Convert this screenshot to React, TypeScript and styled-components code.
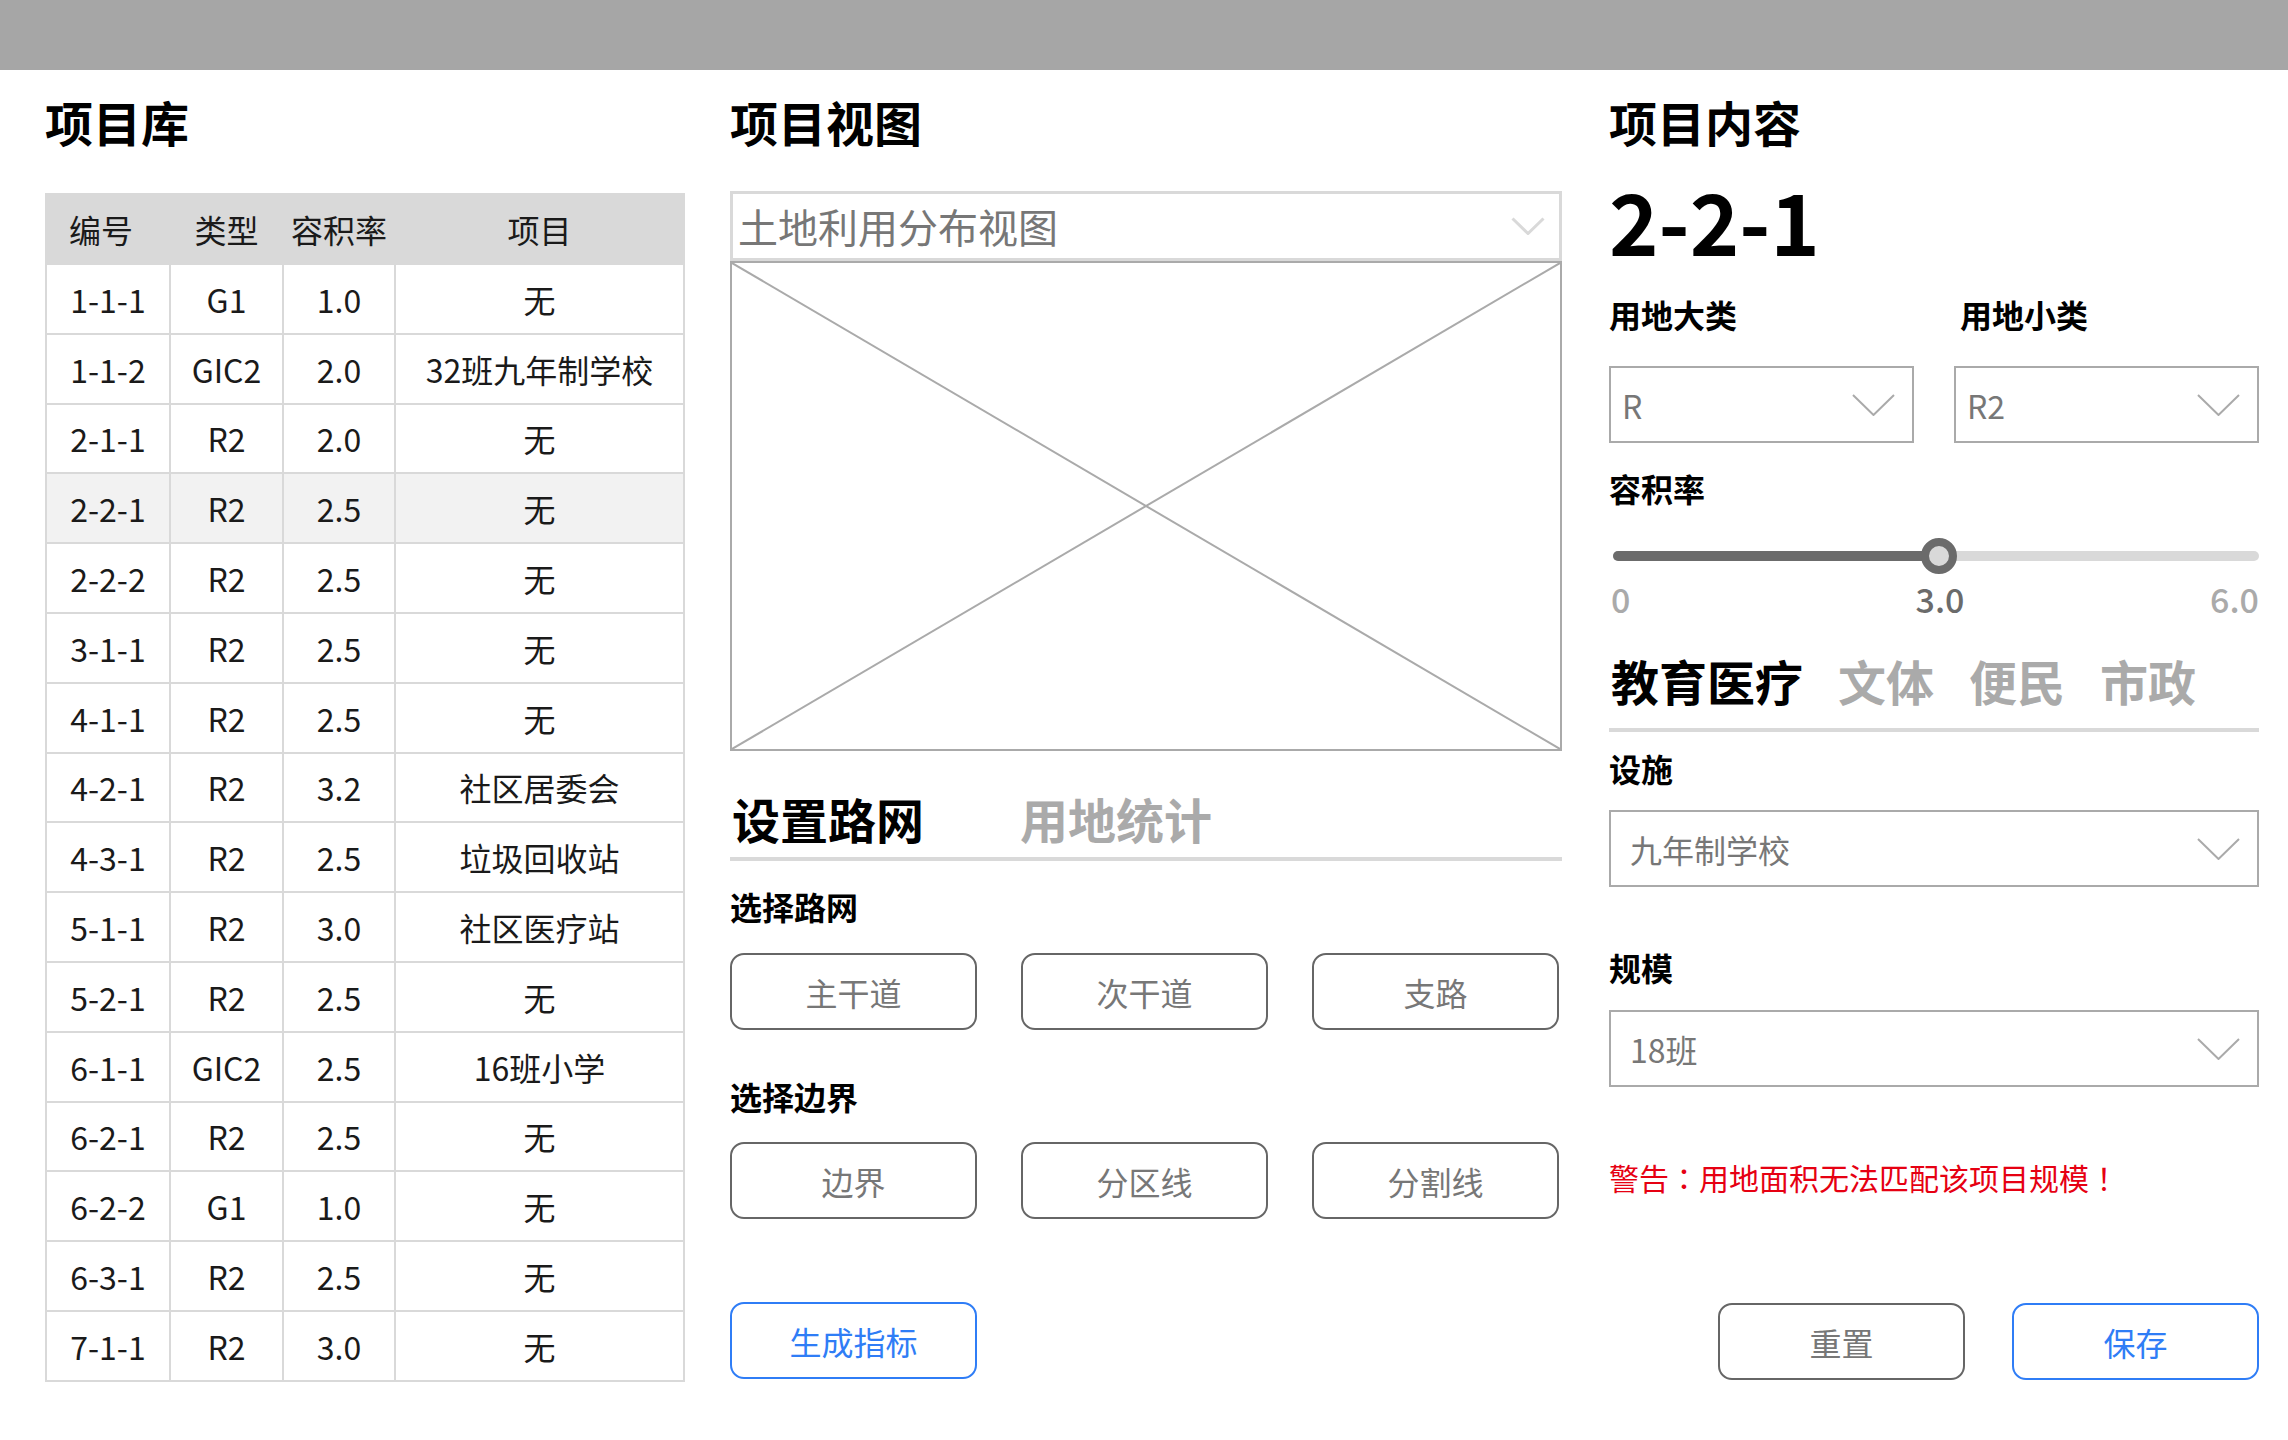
import React from "react";
import styled, { createGlobalStyle } from "styled-components";

const GlobalStyle = createGlobalStyle`
  html, body { margin: 0; padding: 0; background: #ffffff; }
  body {
    font-family: "Noto Sans CJK SC", "Noto Sans", sans-serif;
    color: #111111;
  }
  * { box-sizing: border-box; }
`;

const TopBar = styled.div`
  height: 70px;
  background: #a6a6a6;
`;

const Main = styled.main`
  display: grid;
  grid-template-columns: 638px 832px 650px;
  column-gap: 47px;
  padding: 27px 0 0 45px;
`;

const Panel = styled.section`
  display: flex;
  flex-direction: column;
  align-items: stretch;
`;

const PanelTitle = styled.h2`
  margin: 0;
  font-size: 48px;
  font-weight: 700;
  line-height: 1;
  color: #000;
`;

/* ---------- Left: table ---------- */
const Table = styled.table`
  margin-top: 48px;
  width: 638px;
  border-collapse: collapse;
  table-layout: fixed;
  font-size: 32px;
  color: #1a1a1a;
`;

const HeadRow = styled.tr`
  height: 70px;
`;

const HeadCell = styled.th<{ $padRight?: number }>`
  padding: 0 ${(p) => p.$padRight || 0}px 0 0;
  background: #d9d9d9;
  border: 2px solid #d9d9d9;
  font-weight: 400;
  text-align: center;
  vertical-align: middle;
  line-height: 1;
`;

const Row = styled.tr<{ $active?: boolean }>`
  height: 69.8px;
  background: ${(p) => (p.$active ? "#f2f2f2" : "#ffffff")};
`;

const Cell = styled.td`
  padding: 0;
  border: 2px solid #d9d9d9;
  text-align: center;
  vertical-align: middle;
  line-height: 1;
  white-space: nowrap;
`;

/* ---------- Middle ---------- */
const ViewSelect = styled.div`
  margin-top: 46px;
  height: 70px;
  border: 3px solid #d9d9d9;
  display: flex;
  align-items: center;
  justify-content: space-between;
  padding: 0 14px 0 5px;
  font-size: 40px;
  color: #777777;
  line-height: 1;
`;

const ImageBox = styled.div`
  height: 490px;
  border: 2px solid #aaaaaa;
  svg {
    display: block;
    width: 100%;
    height: 100%;
  }
`;

const TabBar = styled.div<{ $gap: number; $pad: number; $mt: number }>`
  margin-top: ${(p) => p.$mt}px;
  display: flex;
  align-items: flex-end;
  gap: ${(p) => p.$gap}px;
  padding-left: 2px;
  padding-bottom: ${(p) => p.$pad}px;
  border-bottom: 4px solid #d9d9d9;
`;

const Tab = styled.span<{ $active?: boolean }>`
  font-size: 48px;
  font-weight: 700;
  line-height: 1;
  color: ${(p) => (p.$active ? "#000000" : "#aaaaaa")};
`;

const Label = styled.div<{ $mt: number; $ml?: number }>`
  margin-top: ${(p) => p.$mt}px;
  margin-left: ${(p) => p.$ml || 0}px;
  font-size: 32px;
  font-weight: 700;
  line-height: 1;
  color: #000;
`;

const ButtonRow = styled.div<{ $mt: number; $justify?: string }>`
  margin-top: ${(p) => p.$mt}px;
  display: flex;
  justify-content: ${(p) => p.$justify || "flex-start"};
  gap: 44px;
`;

const Button = styled.button<{ $primary?: boolean }>`
  width: 247px;
  height: 77px;
  padding: 0;
  border-radius: 14px;
  background: #ffffff;
  border: 2px solid ${(p) => (p.$primary ? "#2f7df6" : "#666666")};
  color: ${(p) => (p.$primary ? "#2f7df6" : "#777777")};
  font-family: inherit;
  font-size: 32px;
  line-height: 1;
  cursor: pointer;
`;

/* ---------- Right ---------- */
const BigId = styled.div`
  margin-top: 33px;
  font-size: 84px;
  font-weight: 700;
  line-height: 1;
  color: #000;
`;

const FieldGrid = styled.div`
  margin-top: 36px;
  display: grid;
  grid-template-columns: 305px 305px;
  column-gap: 40px;
`;

const Field = styled.div`
  display: flex;
  flex-direction: column;
`;

const Select = styled.div<{ $mt: number; $padL: number }>`
  margin-top: ${(p) => p.$mt}px;
  height: 77px;
  border: 2px solid #aaaaaa;
  display: flex;
  align-items: center;
  justify-content: space-between;
  padding: 0 17px 0 ${(p) => p.$padL}px;
  font-size: 32px;
  line-height: 1;
  color: #777777;
`;

const SliderWrap = styled.div`
  margin-top: 34px;
  height: 36px;
  padding-left: 4px;
  display: flex;
  align-items: center;
`;

const Track = styled.div`
  position: relative;
  width: 100%;
  height: 10px;
  border-radius: 5px;
  background: #d9d9d9;
`;

const Fill = styled.div`
  height: 100%;
  border-radius: 5px;
  background: #6b6b6b;
`;

const Thumb = styled.div`
  position: absolute;
  top: 50%;
  width: 36px;
  height: 36px;
  border-radius: 50%;
  background: #d9d9d9;
  border: 8px solid #6b6b6b;
  transform: translate(-50%, -50%);
`;

const SliderLabels = styled.div`
  margin-top: 8px;
  padding-left: 12px;
  display: grid;
  grid-template-columns: 1fr auto 1fr;
  font-size: 34px;
  font-weight: 500;
  line-height: 1;
`;

const SliderLabel = styled.span<{ $align: string; $dark?: boolean }>`
  text-align: ${(p) => p.$align};
  color: ${(p) => (p.$dark ? "#6b6b6b" : "#aaaaaa")};
  &:first-child {
    margin-left: -10px;
  }
`;

const Warning = styled.div`
  margin-top: 75px;
  font-size: 30px;
  line-height: 1;
  color: #e60012;
`;

const Punct = styled.span`
  font-family: "Noto Sans CJK TC", "Noto Sans CJK SC", sans-serif;
`;

const Chevron: React.FC<{ w: number; h: number; color: string; sw: number }> = ({ w, h, color, sw }) => (
  <svg width={w} height={h} viewBox={`0 0 ${w} ${h}`} fill="none">
    <polyline
      points={`${sw / 2},${sw / 2} ${w / 2},${h - sw / 2} ${w - sw / 2},${sw / 2}`}
      stroke={color}
      strokeWidth={sw}
      fill="none"
    />
  </svg>
);

const rows: [string, string, string, string][] = [
  ["1-1-1", "G1", "1.0", "无"],
  ["1-1-2", "GIC2", "2.0", "32班九年制学校"],
  ["2-1-1", "R2", "2.0", "无"],
  ["2-2-1", "R2", "2.5", "无"],
  ["2-2-2", "R2", "2.5", "无"],
  ["3-1-1", "R2", "2.5", "无"],
  ["4-1-1", "R2", "2.5", "无"],
  ["4-2-1", "R2", "3.2", "社区居委会"],
  ["4-3-1", "R2", "2.5", "垃圾回收站"],
  ["5-1-1", "R2", "3.0", "社区医疗站"],
  ["5-2-1", "R2", "2.5", "无"],
  ["6-1-1", "GIC2", "2.5", "16班小学"],
  ["6-2-1", "R2", "2.5", "无"],
  ["6-2-2", "G1", "1.0", "无"],
  ["6-3-1", "R2", "2.5", "无"],
  ["7-1-1", "R2", "3.0", "无"],
];

export default function App() {
  const pct = 50.5;
  return (
    <>
      <GlobalStyle />
      <TopBar />
      <Main>
        <Panel>
          <PanelTitle>项目库</PanelTitle>
          <Table>
            <colgroup>
              <col style={{ width: 124 }} />
              <col style={{ width: 113 }} />
              <col style={{ width: 112 }} />
              <col style={{ width: 289 }} />
            </colgroup>
            <thead>
              <HeadRow>
                <HeadCell $padRight={14}>编号</HeadCell>
                <HeadCell>类型</HeadCell>
                <HeadCell>容积率</HeadCell>
                <HeadCell>项目</HeadCell>
              </HeadRow>
            </thead>
            <tbody>
              {rows.map((r) => (
                <Row key={r[0]} $active={r[0] === "2-2-1"}>
                  {r.map((c, i) => (
                    <Cell key={i}>{c}</Cell>
                  ))}
                </Row>
              ))}
            </tbody>
          </Table>
        </Panel>

        <Panel>
          <PanelTitle>项目视图</PanelTitle>
          <ViewSelect>
            <span>土地利用分布视图</span>
            <Chevron w={34} h={18} color="#d9d9d9" sw={3} />
          </ViewSelect>
          <ImageBox>
            <svg viewBox="0 0 100 100" preserveAspectRatio="none">
              <line x1="0" y1="0" x2="100" y2="100" stroke="#aaaaaa" strokeWidth="2" vectorEffect="non-scaling-stroke" />
              <line x1="100" y1="0" x2="0" y2="100" stroke="#aaaaaa" strokeWidth="2" vectorEffect="non-scaling-stroke" />
            </svg>
          </ImageBox>
          <TabBar $gap={96} $pad={15} $mt={43}>
            <Tab $active>设置路网</Tab>
            <Tab>用地统计</Tab>
          </TabBar>
          <Label $mt={29}>选择路网</Label>
          <ButtonRow $mt={31}>
            <Button>主干道</Button>
            <Button>次干道</Button>
            <Button>支路</Button>
          </ButtonRow>
          <Label $mt={50}>选择边界</Label>
          <ButtonRow $mt={30}>
            <Button>边界</Button>
            <Button>分区线</Button>
            <Button>分割线</Button>
          </ButtonRow>
          <ButtonRow $mt={83}>
            <Button $primary>生成指标</Button>
          </ButtonRow>
        </Panel>

        <Panel>
          <PanelTitle>项目内容</PanelTitle>
          <BigId>2-2-1</BigId>
          <FieldGrid>
            <Field>
              <Label $mt={0}>用地大类</Label>
              <Select $mt={36} $padL={11}>
                <span>R</span>
                <Chevron w={43} h={22} color="#aaaaaa" sw={2} />
              </Select>
            </Field>
            <Field>
              <Label $mt={0} $ml={6}>用地小类</Label>
              <Select $mt={36} $padL={11}>
                <span>R2</span>
                <Chevron w={43} h={22} color="#aaaaaa" sw={2} />
              </Select>
            </Field>
          </FieldGrid>
          <Label $mt={29}>容积率</Label>
          <SliderWrap>
            <Track>
              <Fill style={{ width: `${pct}%` }} />
              <Thumb style={{ left: `${pct}%` }} />
            </Track>
          </SliderWrap>
          <SliderLabels>
            <SliderLabel $align="left">0</SliderLabel>
            <SliderLabel $align="center" $dark>3.0</SliderLabel>
            <SliderLabel $align="right">6.0</SliderLabel>
          </SliderLabels>
          <TabBar $gap={35} $pad={24} $mt={40}>
            <Tab $active>教育医疗</Tab>
            <Tab>文体</Tab>
            <Tab>便民</Tab>
            <Tab>市政</Tab>
          </TabBar>
          <Label $mt={20}>设施</Label>
          <Select $mt={26} $padL={19}>
            <span>九年制学校</span>
            <Chevron w={43} h={22} color="#aaaaaa" sw={2} />
          </Select>
          <Label $mt={64}>规模</Label>
          <Select $mt={27} $padL={19}>
            <span>18班</span>
            <Chevron w={43} h={22} color="#aaaaaa" sw={2} />
          </Select>
          <Warning>
            警告<Punct>：</Punct>用地面积无法匹配该项目规模<Punct>！</Punct>
          </Warning>
          <ButtonRow $mt={111} $justify="flex-end" style={{ gap: 47 }}>
            <Button>重置</Button>
            <Button $primary>保存</Button>
          </ButtonRow>
        </Panel>
      </Main>
    </>
  );
}
